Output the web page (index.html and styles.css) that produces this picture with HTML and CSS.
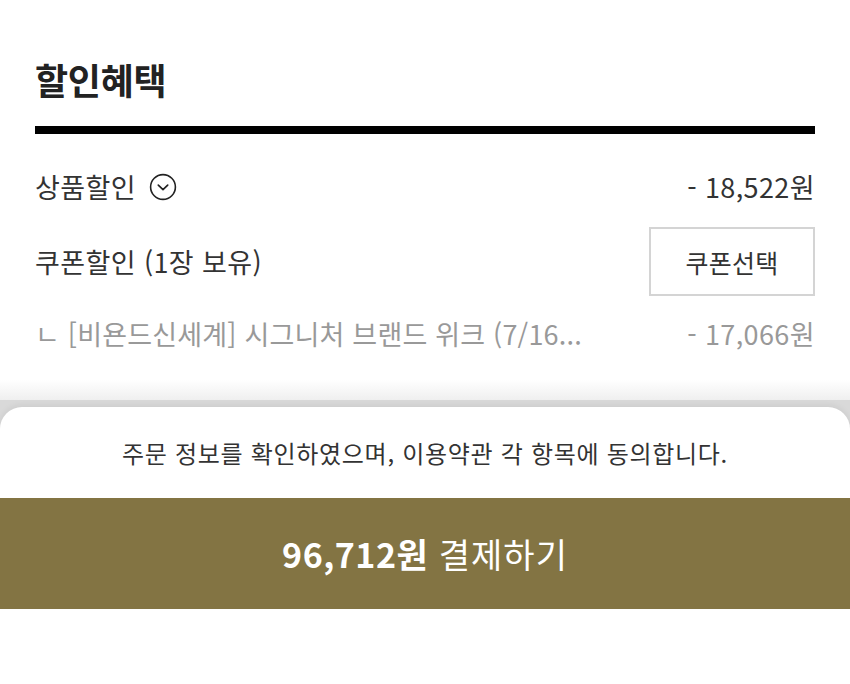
FILE: index.html
```html
<!DOCTYPE html>
<html lang="ko">
<head>
  <meta charset="utf-8">
  <title>결제</title>
  <meta name="viewport" content="width=device-width, initial-scale=1">
  <link rel="stylesheet" href="styles.css">
</head>
<body>

<div class="benefit"><!--할인 혜택 영역-->
  <h2 class="title">할인혜택</h2>
  <div class="rule"></div>

  <div class="row">
    <div class="label">상품할인
      <svg class="toggle" width="28" height="28" viewBox="0 0 28 28">
        <circle cx="14" cy="14" r="12.4" fill="none" stroke="#222" stroke-width="1.6"/>
        <path d="M9.3 12.2 L14 16.6 L18.7 12.2" fill="none" stroke="#222" stroke-width="1.7" stroke-linecap="round" stroke-linejoin="round"/>
      </svg>
    </div>
    <div class="amount">- 18,522원</div>
  </div>

  <div class="row coupon">
    <div class="label">쿠폰할인 (1장 보유)</div>
    <button type="button" class="couponbtn">쿠폰선택</button>
  </div>

  <div class="row sub">
    <div class="label name">ㄴ [비욘드신세계] 시그니처 브랜드 위크 (7/16...</div>
    <div class="amount">- 17,066원</div>
  </div>
</div>

<div class="fade"></div>
<div class="sheetwrap"><!--하단 결제 시트-->
  <div class="sheet">
    <p class="agree">주문 정보를 확인하였으며, 이용약관 각 항목에 동의합니다.</p>
    <button type="button" class="paybtn"><b>96,712원</b> 결제하기</button>
    <div class="bottom"></div>
  </div>
</div>

</body>
</html>
```

FILE: styles.css
```css
/*page base*/
body {
  margin: 0;
  background: #fff;
  font-family: "Noto Sans CJK KR", "Noto Sans", sans-serif;
  color: #333;
}

p {
  margin: 0;
}

.benefit {
  padding: 0 35px;
  height: 380px;
  overflow: hidden;
}

.title {
  margin: 0;
  padding-top: 54px;
  font-size: 36px;
  line-height: 50px;
  font-weight: 700;
  color: #222;
  letter-spacing: -0.3px;
}

.rule {
  margin-top: 22px;
  height: 8px;
  background: #000;
}

.row {
  display: flex;
  justify-content: space-between;
  align-items: center;
  font-size: 27px;
  line-height: 38px;
  color: #333;
  letter-spacing: 0.4px;
}

.rule + .row {
  margin-top: 34px;
}

.label {
  display: flex;
  align-items: center;
  gap: 13px;
}

.toggle {
  flex: none;
}

.coupon {
  margin-top: 21px;
}

.couponbtn {
  width: 166px;
  height: 69px;
  border: 2px solid #d4d4d4;
  background: #fff;
  font-family: inherit;
  font-size: 25px;
  letter-spacing: 0.3px;
  color: #333;
  padding: 0;
  cursor: pointer;
}

.sub {
  margin-top: 19px;
  color: #999;
}

.name {
  display: block;
  white-space: nowrap;
  letter-spacing: 0.2px;
}

/* shading above the sheet */
.fade {
  height: 20px;
  background: linear-gradient(#fff, #efefef);
}

.sheetwrap {
  background: #d9d9d9;
  padding-top: 7px;
}

.sheet {
  background: #fff;
  border-radius: 22px 22px 0 0;
  box-shadow: 0 -2px 6px rgba(0, 0, 0, 0.06);
}

.agree {
  text-align: center;
  font-size: 24px;
  line-height: 32px;
  padding: 30px 0 29px;
  color: #333;
  letter-spacing: 0.7px;
}

.paybtn {
  display: block;
  width: 100%;
  height: 111px;
  border: none;
  background: #837443;
  color: #fff;
  font-family: inherit;
  font-size: 34px;
  font-weight: 400;
  letter-spacing: 1px;
  padding: 0;
  cursor: pointer;
}

.paybtn b {
  font-size: 34px;
  font-weight: 700;
  letter-spacing: 0.5px;
}

.bottom {
  height: 80px;
  background: #fff;
}
```
